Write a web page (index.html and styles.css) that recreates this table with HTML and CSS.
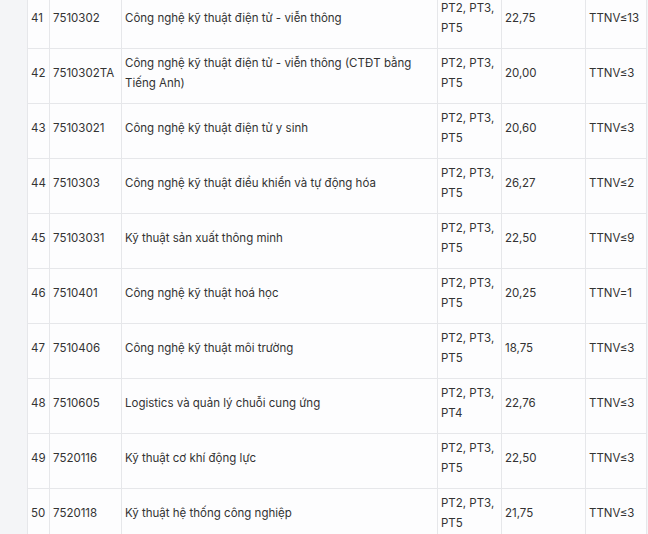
FILE: index.html
```html
<!DOCTYPE html>
<html lang="vi">
<head>
<meta charset="utf-8">
<link rel="stylesheet" href="styles.css">
</head>
<body>
<div class="wrap">
<table class="tbl">
<colgroup>
<col class="c-stt"><col class="c-code"><col class="c-name"><col class="c-pt"><col class="c-score"><col class="c-nv">
</colgroup>
<tbody>
<tr><td class="nw">41</td><td class="nw">7510302</td><td>Công nghệ kỹ thuật điện tử - viễn thông</td><td>PT2, PT3, PT5</td><td>22,75</td><td class="nw">TTNV≤13</td></tr>
<tr><td class="nw">42</td><td class="nw">7510302TA</td><td>Công nghệ kỹ thuật điện tử - viễn thông (CTĐT bằng Tiếng Anh)</td><td>PT2, PT3, PT5</td><td>20,00</td><td class="nw">TTNV≤3</td></tr>
<tr><td class="nw">43</td><td class="nw">75103021</td><td>Công nghệ kỹ thuật điện tử y sinh</td><td>PT2, PT3, PT5</td><td>20,60</td><td class="nw">TTNV≤3</td></tr>
<tr><td class="nw">44</td><td class="nw">7510303</td><td>Công nghệ kỹ thuật điều khiển và tự động hóa</td><td>PT2, PT3, PT5</td><td>26,27</td><td class="nw">TTNV≤2</td></tr>
<tr><td class="nw">45</td><td class="nw">75103031</td><td>Kỹ thuật sản xuất thông minh</td><td>PT2, PT3, PT5</td><td>22,50</td><td class="nw">TTNV≤9</td></tr>
<tr><td class="nw">46</td><td class="nw">7510401</td><td>Công nghệ kỹ thuật hoá học</td><td>PT2, PT3, PT5</td><td>20,25</td><td class="nw">TTNV=1</td></tr>
<tr><td class="nw">47</td><td class="nw">7510406</td><td>Công nghệ kỹ thuật môi trường</td><td>PT2, PT3, PT5</td><td>18,75</td><td class="nw">TTNV≤3</td></tr>
<tr><td class="nw">48</td><td class="nw">7510605</td><td>Logistics và quản lý chuỗi cung ứng</td><td>PT2, PT3, PT4</td><td>22,76</td><td class="nw">TTNV≤3</td></tr>
<tr><td class="nw">49</td><td class="nw">7520116</td><td>Kỹ thuật cơ khí động lực</td><td>PT2, PT3, PT5</td><td>22,50</td><td class="nw">TTNV≤3</td></tr>
<tr><td class="nw">50</td><td class="nw">7520118</td><td>Kỹ thuật hệ thống công nghiệp</td><td>PT2, PT3, PT5</td><td>21,75</td><td class="nw">TTNV≤3</td></tr>
</tbody>
</table>
</div>
</body>
</html>
```
FILE: styles.css
```css
html, body {
  margin: 0;
  padding: 0;
  background: #f4f5f7;
}
.wrap {
  margin-top: -7px;
  padding-left: 27px;
}
.tbl {
  border-collapse: collapse;
  table-layout: fixed;
  width: 619px;
  background: #fdfdfe;
  font-family: Inter, "Noto Sans", sans-serif;
  font-size: 11.5px;
  line-height: 20px;
  color: #333333;
}
.c-stt { width: 22px; }
.c-code { width: 72px; }
.c-name { width: 316px; }
.c-pt { width: 64px; }
.c-score { width: 84px; }
.c-nv { width: 61px; }
.tbl td {
  border: 1px solid #e6e7ea;
  height: 55px;
  box-sizing: border-box;
  padding: 3px 2px 10px 3px;
  vertical-align: middle;
  overflow-wrap: break-word;
}
.tbl td.nw {
  white-space: nowrap;
  overflow: hidden;
}
```
